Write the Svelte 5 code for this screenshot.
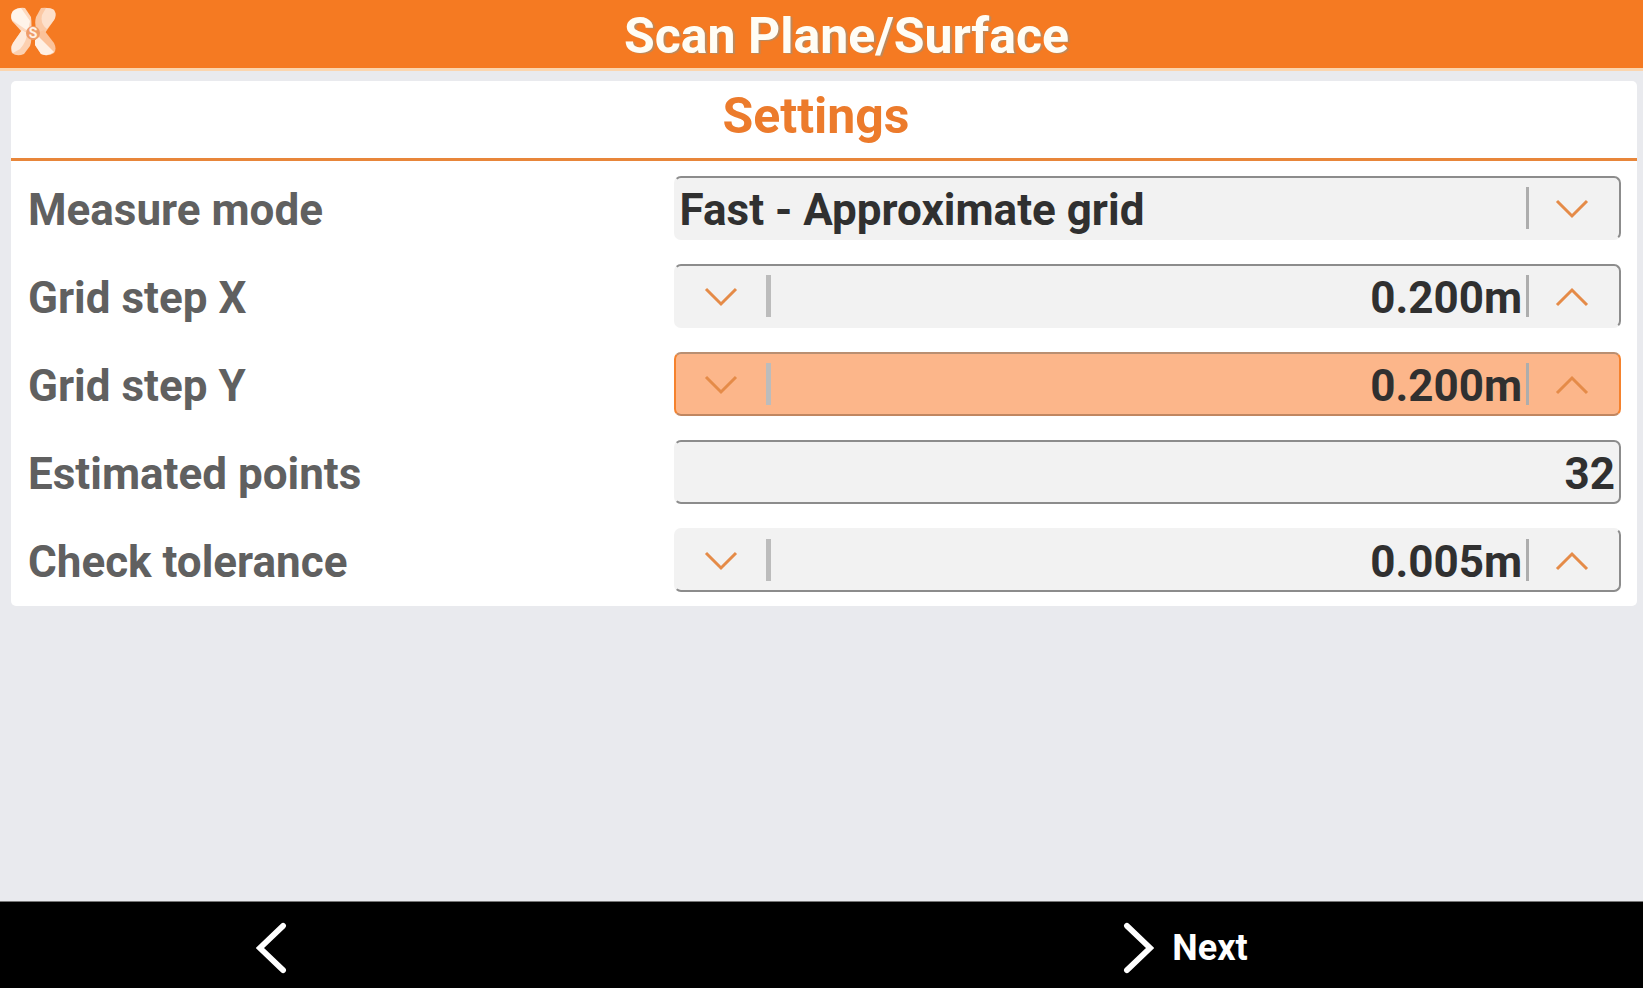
<script lang="ts">
	let mode = $state("fast");
	let active = $state("stepY");

	let steppers = $state([
		{ id: "stepX", label: "Grid step X", value: 0.2, step: 0.05 },
		{ id: "stepY", label: "Grid step Y", value: 0.2, step: 0.05 },
	]);
	let tolerance = $state({ id: "tolerance", label: "Check tolerance", value: 0.005, step: 0.001 });

	function change(item: { id: string; value: number; step: number }, dir: number) {
		active = item.id;
		item.value = Math.max(0, item.value + dir * item.step);
	}
</script>

{#snippet chevron(up: boolean)}
	<svg class="chevron" viewBox="0 0 34 20" fill="none" aria-hidden="true">
		<path d={up ? "M2 18L17 3L32 18" : "M2 2L17 17L32 2"} />
	</svg>
{/snippet}

{#snippet stepper(item: any, edge: string)}
	<div class="row">
		<label for={item.id}>{item.label}</label>
		<div class="field {edge}" class:active={active === item.id}>
			<button class="step" aria-label="Decrease {item.label}" onclick={() => change(item, -1)}>
				{@render chevron(false)}
			</button>
			<span class="divider thick"></span>
			<input
				id={item.id}
				value={item.value.toFixed(3) + "m"}
				onfocus={() => (active = item.id)}
			/>
			<span class="divider"></span>
			<button class="step up" aria-label="Increase {item.label}" onclick={() => change(item, 1)}>
				{@render chevron(true)}
			</button>
		</div>
	</div>
{/snippet}

<div class="app">
	<header>
		<svg class="logo" viewBox="0 0 46 50" aria-hidden="true">
			<path fill="#fdd9bf" d="M3 4Q8 0 15 1L21 10Q22 19 21 25L13 26L2 14Q0 8 3 4Z" />
			<path fill="#fff4ea" d="M3 4Q7 1 11 1L20 14L18 24L2 13Q0 8 3 4Z" />
			<path fill="#fbc9a5" d="M31 1Q39 0 44 3Q47 8 44 13L35 26L27 25Q24 17 26 10Z" />
			<path fill="#fde0cb" d="M36 1Q42 1 44 3Q47 8 44 13L37 22Q30 17 32 8Z" />
			<path fill="#fcd0b0" d="M12 23L21 26Q22 34 20 39L14 47Q7 50 2 46Q0 41 3 36Z" />
			<path fill="#feeadb" d="M12 23L17 26Q17 34 10 42L3 46Q0 41 3 36Z" />
			<path fill="#fbc29a" d="M27 26L34 23L44 36Q47 42 44 46Q38 50 31 47L25 38Z" />
			<path fill="#fff0e4" d="M25 33L29 30L44 45Q38 50 31 47L25 38Z" />
			<circle cx="23" cy="26" r="7" fill="#ee9c68" />
			<text x="23" y="31" text-anchor="middle">S</text>
		</svg>
		<h1>Scan Plane/Surface</h1>
	</header>

	<main>
		<section class="card">
			<h2>Settings</h2>
			<div class="rows">
				<div class="row">
					<label for="mode">Measure mode</label>
					<div class="field no-bottom">
						<select id="mode" bind:value={mode}>
							<option value="fast">Fast - Approximate grid</option>
							<option value="precise">Precise - Exact grid</option>
						</select>
						<span class="divider"></span>
						<span class="step up">{@render chevron(false)}</span>
					</div>
				</div>
				{@render stepper(steppers[0], "no-bottom")}
				{@render stepper(steppers[1], "")}
				<div class="row">
					<label for="points">Estimated points</label>
					<div class="field">
						<input id="points" value="32" readonly />
					</div>
				</div>
				{@render stepper(tolerance, "no-top")}
			</div>
		</section>
	</main>

	<footer>
		<button class="back" aria-label="Back">
			<svg viewBox="0 0 32 54" fill="none" aria-hidden="true">
				<path d="M28 4L4 27L28 50" />
			</svg>
		</button>
		<button class="next">
			<svg viewBox="0 0 32 54" fill="none" aria-hidden="true">
				<path d="M4 4L28 27L4 50" />
			</svg>
			Next
		</button>
	</footer>
</div>

<style>
	:global(body) {
		background: #e9eaee;
	}

	.app {
		display: flex;
		flex-direction: column;
		min-height: 100vh;
		font-family: Roboto, "Liberation Sans", sans-serif;
		font-weight: 700;
	}

	header {
		display: flex;
		align-items: center;
		height: 68px;
		padding: 0 6px 0 10px;
		background: #f57a22;
		border-bottom: 3px solid #fbd5ae;
	}

	.logo {
		width: 46px;
		height: 50px;
		margin-bottom: 4px;
	}

	.logo text {
		font-size: 14px;
		fill: #fff1e4;
	}

	h1 {
		flex: 1;
		margin: 0;
		padding-top: 4px;
		font-size: 50px;
		line-height: 64px;
		text-align: center;
		color: #fffdf5;
		text-shadow: 2px 1px 1px #b98a60;
	}

	main {
		flex: 1;
		padding: 10px 6px 24px 11px;
	}

	.card {
		background: #fff;
		border-radius: 5px;
	}

	h2 {
		margin: 0;
		padding: 0 16px 6px 0;
		border-bottom: 3px solid #e8863a;
		font-size: 50px;
		line-height: 71px;
		text-align: center;
		color: #ec7b2c;
	}

	.rows {
		display: grid;
		gap: 24px;
		padding: 15px 16px 14px;
	}

	.row {
		display: grid;
		grid-template-columns: 647fr 948fr;
		align-items: center;
	}

	label {
		padding: 4px 0 0 1px;
		font-size: 44px;
		line-height: 52px;
		color: #606060;
	}

	.field {
		position: relative;
		display: flex;
		align-items: center;
		box-sizing: border-box;
		height: 64px;
		background: #f2f2f2;
		border: 2px solid #8c8c8c;
		border-left-color: transparent;
		border-radius: 7px;
	}

	.no-bottom {
		border-bottom-color: transparent;
	}

	.no-top {
		border-top-color: transparent;
	}

	.active {
		background: #fcb68a;
		border-color: #b98f72 #f5822d #c08660 #f5822d;
	}

	input,
	select {
		flex: 1;
		min-width: 0;
		height: 60px;
		padding: 3px 4px 0;
		border: none;
		outline: none;
		background: none;
		font: inherit;
		font-size: 44px;
		color: #303030;
	}

	input {
		text-align: right;
	}

	select {
		appearance: none;
		cursor: pointer;
	}

	.divider {
		width: 3px;
		height: 42px;
		background: #adadad;
	}

	.thick {
		width: 5px;
		background: #bcbcbc;
	}

	.step {
		display: flex;
		align-items: center;
		justify-content: center;
		width: 90px;
		height: 60px;
		padding: 2px 0 0;
		border: none;
		background: none;
		cursor: pointer;
	}

	.up {
		padding-right: 4px;
		box-sizing: border-box;
	}

	span.step {
		pointer-events: none;
	}

	.chevron {
		width: 34px;
		height: 20px;
	}

	.chevron path {
		stroke: #e58b48;
		stroke-width: 3;
	}

	footer {
		display: grid;
		grid-template-columns: repeat(3, 1fr);
		height: 86px;
		background: #000;
		border-top: 1px solid #777;
	}

	footer button {
		display: flex;
		align-items: center;
		gap: 18px;
		padding: 6px 0 0;
		border: none;
		background: none;
		color: #fff;
		font: inherit;
		font-size: 36px;
		cursor: pointer;
	}

	footer svg {
		width: 31px;
		height: 52px;
	}

	footer path {
		stroke: #fff;
		stroke-width: 6;
		stroke-linecap: round;
	}

	footer .back {
		justify-content: center;
		padding-right: 5px;
	}

	footer .next {
		grid-column: 3;
		padding-left: 28px;
	}
</style>
